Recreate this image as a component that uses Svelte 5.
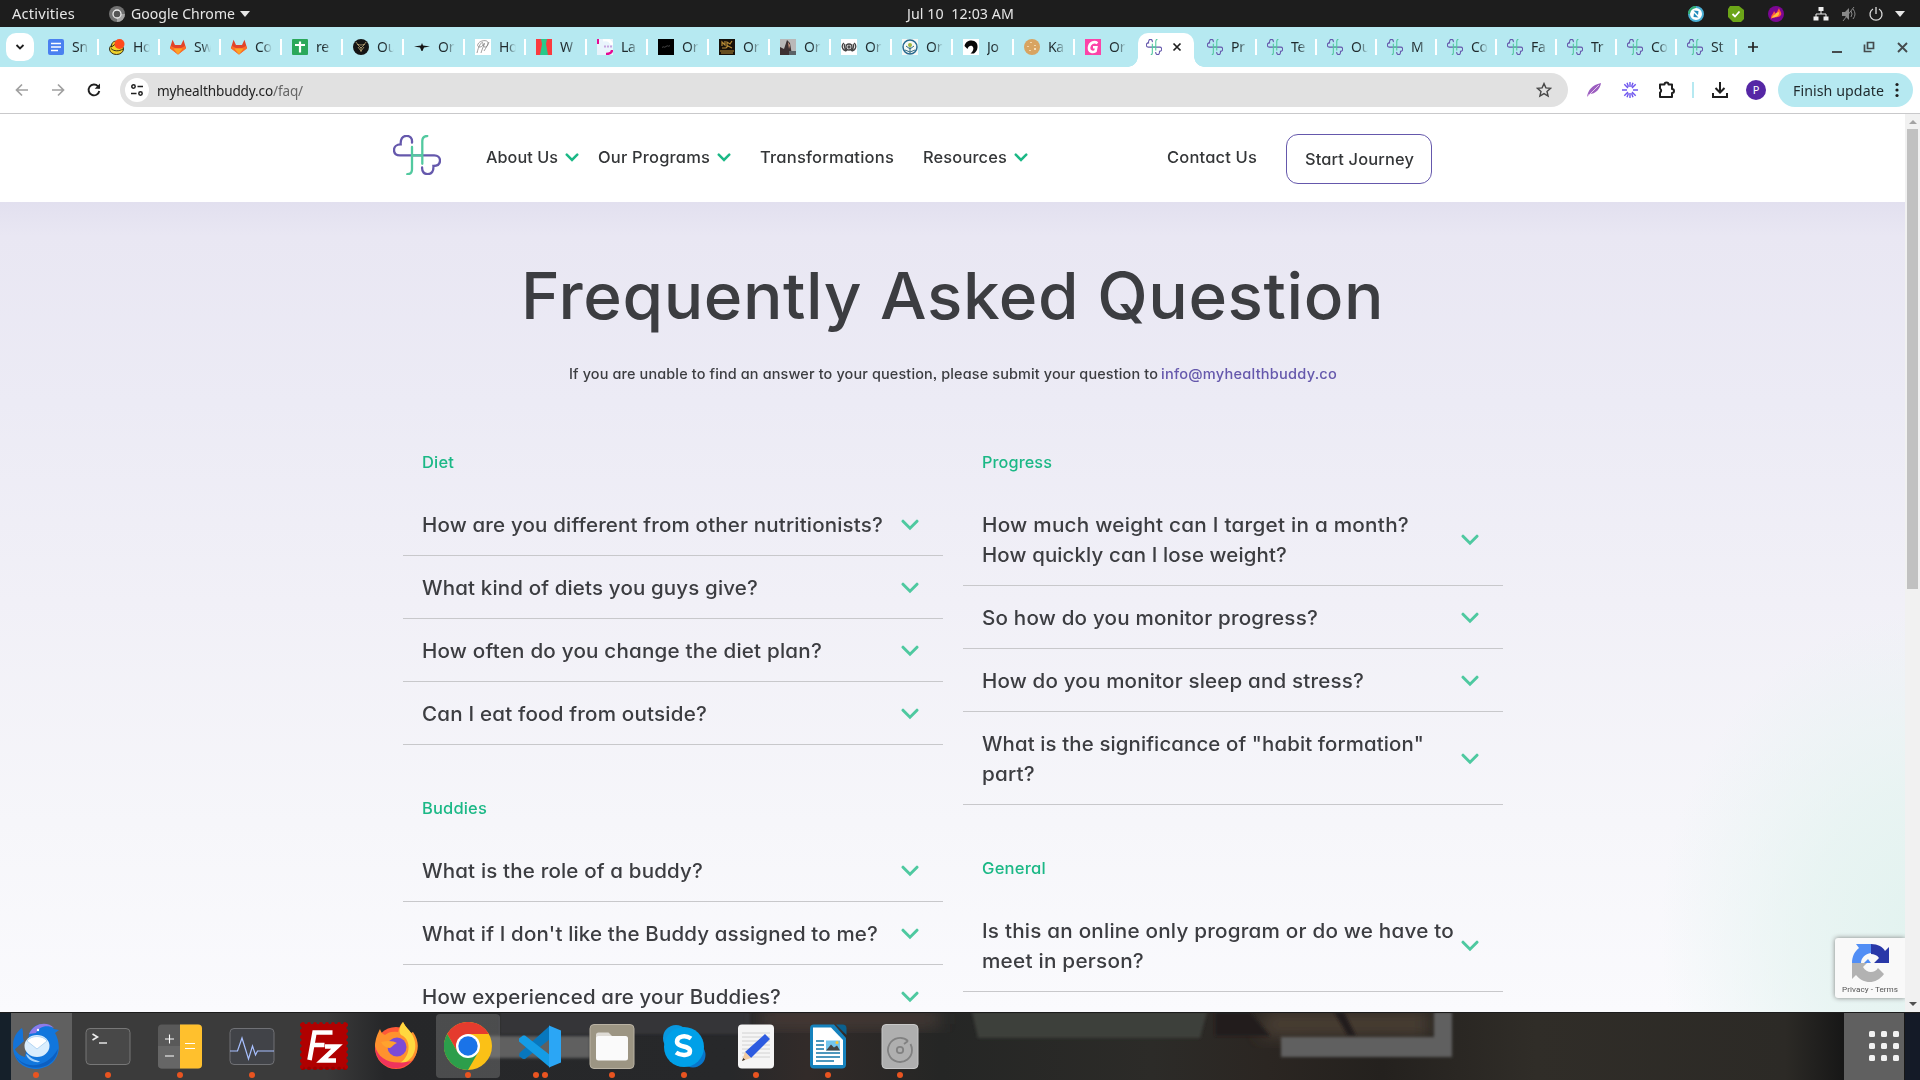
<script>
  // Fills the given width with a line of text: part of the difference goes
  // into wider glyphs, the rest into the space between the letters.
  function fit(node, width) {
    const apply = (w) => {
      const s = node.style;
      s.display = 'inline-block';
      s.transform = 'none';
      s.marginRight = '0px';
      s.letterSpacing = '0px';
      s.width = 'max-content';
      const natural = node.getBoundingClientRect().width;
      const scale = 1 + (w / natural - 1) * 0.6;
      const inner = w / scale;
      s.letterSpacing = `${(inner - natural) / node.textContent.length}px`;
      s.width = `${inner}px`;
      s.transformOrigin = '0 50%';
      s.transform = `scaleX(${scale})`;
      s.marginRight = `${w - inner}px`;
    };
    apply(width);
    return { update: apply };
  }

  const tabs = [
    ['docs', 'Sn'], ['hat', 'Ho'], ['gitlab', 'Sw'], ['gitlab', 'Co'], ['sheets', 're'],
    ['beads', 'Ou'], ['plane', 'Or'], ['script', 'Ho'], ['dress', 'W'], ['lasso', 'La'],
    ['black', 'Or'], ['gold', 'Or'], ['photo', 'Or'], ['wreath', 'Or'], ['tree', 'Or'],
    ['helmet', 'Jo'], ['cookie', 'Ka'], ['pink', 'Or']
  ];
  const buddyTabs = ['Pr', 'Te', 'Ou', 'M', 'Co', 'Fa', 'Tr', 'Co', 'St'];

  const columns = [
    [
      { name: 'Diet', w: 32, items: [
        [['How are you different from other nutritionists?', 461]],
        [['What kind of diets you guys give?', 336]],
        [['How often do you change the diet plan?', 400]],
        [['Can I eat food from outside?', 285]]
      ] },
      { name: 'Buddies', w: 65, items: [
        [['What is the role of a buddy?', 281]],
        [["What if I don't like the Buddy assigned to me?", 456]],
        [['How experienced are your Buddies?', 359]]
      ] }
    ],
    [
      { name: 'Progress', w: 70, items: [
        [['How much weight can I target in a month?', 427], ['How quickly can I lose weight?', 305]],
        [['So how do you monitor progress?', 336]],
        [['How do you monitor sleep and stress?', 382]],
        [['What is the significance of "habit formation"', 442], ['part?', 53]]
      ] },
      { name: 'General', w: 64, items: [
        [['Is this an online only program or do we have to', 472], ['meet in person?', 162]]
      ] }
    ]
  ];

  const dock = [
    ['mail', 1], ['terminal', 1], ['calc', 1], ['monitor', 1], ['filezilla', 0], ['firefox', 0], ['chrome', 1],
    ['code', 2], ['files', 1], ['skype', 1], ['editor', 1], ['writer', 1], ['disk', 1]
  ];
  const teeth = Array.from({ length: 8 }, (_, i) => 3 + i * 6);
</script>

{#snippet logo()}
  <path d="M19 7.7C19.5 3 17 .9 13.5.9 9.5.9 7.3 4 7.7 9.4 3.500 9.400 1 12 1 15c0 3.200 2.200 5.400 5.800 5.400h34.400c3.600 0 5.800 2.200 5.800 5.200 0 3.400-2.600 5.400-6.600 5.400.4 5.200-1.800 8.100-5.600 8.100-3.800 0-5.900-2.400-5.700-6.600" stroke="#6558ac" />
  <path d="M14.300 39.200c3.200 0 4.700-1.800 4.700-5V12M29.300 28.800V6c0-3.200 1.700-5 5-5M19 20.400h10.300" stroke="#52c99f" />
{/snippet}

{#snippet chevron(size)}
  <svg class="chev" class:big={size === 'big'} viewBox="0 0 18 12"><path d="m2 2.200 7 7 7-7" /></svg>
{/snippet}

{#snippet favicon(kind)}
  <svg class="fav" viewBox="0 0 16 16">
    {#if kind === 'docs'}
      <rect width="16" height="16" rx="2" fill="#4a80f0" /><path d="M3 4.500h10M3 8h10M3 11.500h7" stroke="#fff" stroke-width="1.700" />
    {:else if kind === 'hat'}
      <ellipse cx="7.500" cy="10" rx="7" ry="5.500" fill="#efd32c" stroke="#332b16" /><path d="M2.500 8C2 3 6 1 9 3z" fill="#efd32c" stroke="#332b16" /><circle cx="10.500" cy="5" r="5" fill="#ff4a1c" /><path d="M2 9.500c3 3 8 3 12 .5" stroke="#332b16" fill="none" />
    {:else if kind === 'gitlab'}
      <path d="M8 15.500 0 9 2.500.8 5 6h6L13.500.8 16 9z" fill="#e24329" /><path d="m8 15.500-8-6L1 7l4 2h6l4-2 1 2.500z" fill="#fc6d26" /><path d="m3.500 9.500 4.500 6 4.500-6z" fill="#fca326" />
    {:else if kind === 'sheets'}
      <rect width="16" height="16" rx="1" fill="#2aa85a" /><path d="M8 2.500v11M3 6h10" stroke="#fff" stroke-width="2.200" />
    {:else if kind === 'beads'}
      <circle cx="8" cy="8" r="8" fill="#151515" /><path d="M3 3c1 4 9 4 10 0M4 5l4 4 4-4M8 8v5M5 8l3 4 3-4" stroke="#bda777" fill="none" stroke-width=".8" />
    {:else if kind === 'plane'}
      <path d="M0 7.500 7 6.500 8 4l1 2.500 7 1-6 1L8.500 12h-1L6 8.500z" fill="#151515" />
    {:else if kind === 'script'}
      <rect width="16" height="16" fill="#fff" /><path d="M2 14C4 5 8 1 8 5s-7 4-5 0 11-5 10 0-6 3-4 0-2 5-3 9M9 12c2-3 4-7 5-9" stroke="#777" fill="none" stroke-width=".7" />
    {:else if kind === 'dress'}
      <rect width="16" height="16" fill="#fb3a3e" /><path d="M5 0h6l-1 5 2 11H4L6 5z" fill="#27c88b" />
    {:else if kind === 'lasso'}
      <rect width="16" height="16" fill="#e9f4fc" /><path d="M1 0v5" stroke="#e60a94" stroke-width="2" /><path d="M6 1c5-1 8 1 9 5" stroke="#fff" stroke-width="3" fill="none" /><path d="M15 11c0 2-2 4-6 4" stroke="#e60a94" stroke-width="2.500" fill="none" /><path d="M7 7.500h8" stroke="#c7a3df" stroke-width="2" stroke-dasharray="2 1" />
    {:else if kind === 'black'}
      <rect width="16" height="16" /><path d="M4 8.500c2-2 2 1 4-1s2 1 4-1" stroke="#444" fill="none" />
    {:else if kind === 'gold'}
      <rect width="16" height="16" fill="#16110a" /><path d="M3 7V3l3 3V2M8 8V3l3 2 2-3M3 9h4l2-2 4 2M1 12h14M2 14h12" stroke="#b58a35" fill="none" stroke-width="1.200" />
    {:else if kind === 'photo'}
      <rect width="16" height="16" fill="#b9b8b8" /><path d="M0 16V8l4 2 3-9 3 3 2 12z" fill="#3d3132" /><path d="m8 3 2 3-1 4z" fill="#d6a189" /><path d="M9 12h7v4H9z" fill="#5b6166" />
    {:else if kind === 'wreath'}
      <rect width="16" height="16" fill="#fff" /><g stroke="#444" fill="none" stroke-width="1.300"><circle cx="8" cy="8" r="3" /><circle cx="8" cy="8" r="1" /><path d="M3 4C0 6 1 11 5 12M13 4c3 2 2 7-2 8M4 5C2 8 4 10 6 12M12 5c2 3 0 5-2 7" /></g>
    {:else if kind === 'tree'}
      <rect width="16" height="16" fill="#f6f8f5" /><circle cx="8" cy="8" r="7" fill="none" stroke="#276b91" stroke-width="1.500" /><path d="M8 15V5M8 10 4 7M8 10l4-3M8 13l-5-2M8 13l5-2" stroke="#326c82" /><circle cx="8" cy="6" r="2" fill="#a2b83e" />
    {:else if kind === 'helmet'}
      <rect width="16" height="16" fill="#fff" /><path d="M1.500 7C2.500 3 5 1.500 8.500 1.500c4 0 6.500 3 6 7-.3 3-1.500 4.500-3.500 6H7.500c2.500-2 3.500-4.500 2.500-6.500C8.500 5.500 5 7 4.500 10z" fill="#080808" />
    {:else if kind === 'cookie'}
      <circle cx="8" cy="8" r="8" fill="#d8a461" /><path d="M7 3v1M4 7v1M11 6v1M6 11v1M10 10h2" stroke="#fff0d2" stroke-width="1.300" />
    {:else}
      <rect width="16" height="16" fill="#fc43a8" /><path d="M12.500 4.200C9 1.700 4.500 4 4 8.500c-.3 4 3.500 5.500 6.500 3.700l.8-4H8" stroke="#fff" stroke-width="2.600" fill="none" />
    {/if}
  </svg>
{/snippet}

{#snippet buddyIcon()}
  <svg class="fav" viewBox="0 0 48 40" preserveAspectRatio="none"><g fill="none" stroke-width="3.200">{@render logo()}</g></svg>
{/snippet}

{#snippet app(kind)}
  <svg class="app" viewBox="0 0 48 48">
    {#if kind === 'mail'}
      <path d="M2 28C-1 19 4 10 10 6c2 5 0 9 2 13z" fill="#1373d9" /><path d="M17 12C22-1 37 0 42 7l5 1-4 3c8 14 4 34-18 36C9 47 1 37 1 24c4 8 8 10 12 11z" fill="#1176dd" /><path d="M17 12C22 0 36-1 42 6c-8-4-15-1-18 5z" fill="#8d7bea" /><path d="M2 30c4 15 30 21 44-3-3 24-38 25-44 3z" fill="#0d5fc0" /><ellipse cx="25" cy="24" rx="12.500" ry="11" fill="#d9edfd" /><path d="m15 19 10 8 10-8c-4-6-16-6-20 0z" fill="#fff" stroke="#9cc7ec" stroke-width=".7" /><path d="M16 33c4 5 10 5 12 7-7 1-13-3-14-8z" fill="#a6d2fa" /><circle cx="26" cy="8" r="1.200" fill="#fff" />
    {:else if kind === 'terminal'}
      <rect x="2" y="6.500" width="44" height="36" rx="4" fill="#484848" stroke="#777" /><path d="m8.500 12 5 3-5 3" fill="none" stroke="#eee" stroke-width="1.600" /><path d="M15 21h8" stroke="#eee" stroke-width="1.400" />
    {:else if kind === 'calc'}
      <rect x="2" y="2.500" width="44" height="44" rx="4" fill="#595959" /><path d="M2 24h22v22.500H6a4 4 0 0 1-4-4z" fill="#666" /><path d="M24 2.500h18a4 4 0 0 1 4 4v36a4 4 0 0 1-4 4H24z" fill="#ffc02d" /><path d="M9 17h9M13.500 12.500v9M9 34h9M29 21.500h10M29 26.500h10" stroke="#fff" stroke-width="1.100" />
    {:else if kind === 'monitor'}
      <rect x="2" y="6.500" width="44" height="36" rx="4" fill="#414348" stroke="#707175" /><path d="M2 29h7.500L14 16l6.500 21 4-13 3 9 2-4H46" fill="none" stroke="#a8c0ff" stroke-width="1.200" />
    {:else if kind === 'filezilla'}
      <rect x="1.500" y="2" width="45" height="45" fill="#b00000" />
      {#each teeth as t}<circle cx={t} cy="2" r="1.900" fill="#b00000" /><circle cx={t} cy="46.500" r="1.900" fill="#970000" /><circle cx="1.800" cy={t} r="1.900" fill="#b00000" /><circle cx="46.200" cy={t} r="1.900" fill="#b00000" />{/each}
      <g fill="none" stroke="#fff" stroke-width="4.600"><path d="m9.500 38 5-27.500h18M12.500 23h12" /><path d="M25 24.500h12L22 38.500h14" /></g>
    {:else if kind === 'firefox'}
      <circle cx="24" cy="26" r="21" fill="#ff5938" /><path d="M3 25C3 17 6 11 8 7c1 3 2 5 5 6 3-3 8-4 13-3C27 6 28 3 31 0c3 6 6 8 8 11l2-1c10 14 3 29-8 33C20 47 5 40 3 25z" fill="#ff922e" /><path d="M31 0c3 6 7 8 10 14 7 15-3 28-15 28 12-5 15-24 3-29-3-4-1-9 2-13z" fill="#ffd83f" /><path d="M3 24c3 13 16 20 36 15C28 52 4 47 3 24z" fill="#f0345c" /><circle cx="25" cy="25" r="9.500" fill="#7c4bd6" /><path d="M9 20c7-2 13-1 16 1-3 1-5 4-7 5-4 0-7-2-9-6z" fill="#ffa22e" />
    {:else if kind === 'chrome'}
      <circle cx="24" cy="24" r="24" fill="#fbc116" /><path d="M3.200 12a24 24 0 0 1 41.600 0H24L13.600 30z" fill="#e53b2e" /><path d="M3.200 12A24 24 0 0 0 24 48l10.400-18-10.400 6-10.400-6z" fill="#2c9e4b" /><circle cx="24" cy="24" r="12" fill="#fff" /><circle cx="24" cy="24" r="9.700" fill="#1a73e8" />
    {:else if kind === 'code'}
      <path d="M34 3.500 3.500 31 3 34l4 3h2l25-20z" fill="#0877bd" /><path d="M34 45.500 3 19.500v-3l4-3h2L34 33z" fill="#149ce5" /><path d="m33 3.500 12 5v32l-12 5z" fill="#2ba6f5" />
    {:else if kind === 'files'}
      <rect x="2" y="2.500" width="44" height="44" rx="4" fill="#9c9583" stroke="#b9b2a3" /><path d="M8 13a2.500 2.500 0 0 1 2.500-2.500h10l4 4H37v10H8z" fill="#dedbd5" /><rect x="8" y="14" width="32" height="24.500" rx="2.500" fill="#fafafa" />
    {:else if kind === 'skype'}
      <circle cx="16" cy="16" r="13" fill="#0997df" /><circle cx="33" cy="33" r="12.500" fill="#0876cb" /><circle cx="24" cy="25" r="20" fill="#00a0e8" /><path d="M31 16.500c-6-4-14-2-14 3 0 6.500 13 3.500 13 9.500 0 5-9 5-14 1.500" fill="none" stroke="#fff" stroke-width="4.500" />
    {:else if kind === 'editor'}
      <rect x="6" y="2.500" width="36" height="44" rx="4" fill="#f5f5f5" /><path d="M10 11h28M10 15h28M10 19h28M10 23h28M10 27h28M10 31h28M10 35h28" stroke="#c9c9c9" stroke-width=".8" /><path d="m13 30 20-18 5 5-19 19z" fill="#2d5be0" /><path d="m10 39 3-9 6 6z" fill="#f1cba1" /><path d="m10 39 1.200-3 2 1.800z" fill="#333" />
    {:else if kind === 'writer'}
      <path d="M10 2.500h20L42 16v26.500a4 4 0 0 1-4 4H10a4 4 0 0 1-4-4v-36a4 4 0 0 1 4-4z" fill="#1682bd" /><path d="M32 2.500h6.500a4 4 0 0 1 4 4V13z" fill="#0b618f" /><path d="M9 5.500h18L39 18v25H9z" fill="#fff" /><path d="M12 19h8M12 23h8M12 27h8M12 31h24M12 35h24M12 39h18" stroke="#1376a8" stroke-width="1.700" /><rect x="22" y="18.500" width="14" height="10" fill="#72c5ee" /><path d="m22 28.500 5-6 3 3 3-2 3 5z" fill="#444" /><circle cx="33" cy="20.500" r="1.500" fill="#ffc62f" />
    {:else}
      <rect x="6" y="2.500" width="36" height="44" rx="4" fill="#afafaf" stroke="#c8c8c8" /><path d="M32 19a12 12 0 1 0 4 9c0-2-.5-4-1.500-6M32 19l-4 3" fill="none" stroke="#818181" stroke-width="1.800" /><circle cx="24" cy="28" r="3.200" fill="none" stroke="#818181" stroke-width="1.800" />
    {/if}
  </svg>
{/snippet}

<div class="desktop">
  <header class="topbar">
    <span use:fit={63}>Activities</span>
    <svg class="gchrome" viewBox="0 0 16 16"><circle cx="8" cy="8" r="8" fill="#727272" /><path d="M8 8h8a8 8 0 0 1-8 8z" fill="#a5a5a5" /><circle cx="8" cy="8" r="4" fill="#555" stroke="#eee" stroke-width="1.300" /></svg>
    <div class="appname"><span use:fit={104}>Google Chrome</span></div>
    <i class="tri"></i>
    <div class="clock"><span use:fit={107}>Jul 10&nbsp; 12:03 AM</span></div>
    <div class="tray">
      <svg class="t1" viewBox="0 0 16 16"><circle cx="8" cy="8" r="7" fill="#fff" stroke="#4aafd5" stroke-width="2" /><path d="M1 8a7 7 0 0 1 7-7" stroke="#33ad70" stroke-width="2" fill="none" /><path d="m5.500 4.500 5 .5-.5 4zM10.500 11.500l-5-.5.500-4z" fill="#228bbb" /></svg>
      <svg class="t2" viewBox="0 0 16 16"><path d="M2 0h9l5 4v9l-3 3H5L0 11V3z" fill="#6ca518" /><path d="m4.500 8 2.500 2.500L11.500 5.500" stroke="#fff" stroke-width="1.800" fill="none" /></svg>
      <svg class="t3" viewBox="0 0 16 16"><circle cx="8" cy="8" r="8" fill="#7c0693" /><path d="M3 13C3 8 5 9 6 5l2 3 3-6c1 4 3 4 2 7-3 4-7 1-10 4z" fill="#ff5940" /><path d="M4 12c1-4 3-2 4-5l3-1c1 4-3 5-7 6z" fill="#ffc338" /></svg>
      <svg class="t4" viewBox="0 0 16 16"><path d="M5.500 1h5v4h-5zM.5 10.500h5v4h-5zM10.500 10.500h5v4h-5z" fill="#eee" /><path d="M8 5v3M3 11V8h10v3" stroke="#eee" fill="none" /></svg>
      <svg class="t5" viewBox="0 0 16 16"><path d="M1 6h3l4-4v12l-4-4H1z" fill="#888" /><path d="M10 5q2 3 0 6M12 3q4 5 0 10M2 15 13 1" stroke="#888" fill="none" /></svg>
      <svg class="t6" viewBox="0 0 16 16"><path d="M5 3a6 6 0 1 0 6 0M8 1v7" stroke="#ddd" stroke-width="1.300" fill="none" /></svg>
      <i class="tri"></i>
    </div>
  </header>

  <nav class="tabstrip">
    <button class="tabsearch" aria-label="Search tabs"><svg viewBox="0 0 10 8"><path d="m1.500 2 3.500 3.500L8.500 2" fill="none" stroke="#1f1f1f" stroke-width="1.800" /></svg></button>
    {#each tabs as [icon, title], i}
      <div class="tab" class:bare={i === tabs.length - 1}>{@render favicon(icon)}<span>{title}</span></div>
    {/each}
    <div class="tab active">{@render buddyIcon()}<svg class="close" viewBox="0 0 10 10"><path d="m1.500 1.500 7 7m0-7-7 7" stroke="#1f1f1f" stroke-width="1.700" /></svg></div>
    {#each buddyTabs as title}
      <div class="tab second">{@render buddyIcon()}<span>{title}</span></div>
    {/each}
    <svg class="plus" viewBox="0 0 12 12"><path d="M6 1v10M1 6h10" stroke="#222" stroke-width="1.700" /></svg>
    <svg class="winctl" viewBox="0 0 76 14">
      <path d="M0 12h10" stroke="#454b4d" stroke-width="2" /><path d="M32.500 4.500v7h7M35.500 2.500h6v6h-6z" fill="none" stroke="#454b4d" stroke-width="1.700" /><path d="m66 3 9 9m0-9-9 9" stroke="#454b4d" stroke-width="1.900" />
    </svg>
  </nav>

  <div class="toolbar">
    <div class="navicons">
      <svg viewBox="0 0 16 16"><path d="M14 8H3m5-5.500L2.500 8 8 13.500" fill="none" stroke="#a0a0a0" stroke-width="1.700" /></svg>
      <svg viewBox="0 0 16 16"><path d="M2 8h11M8 2.500 13.500 8 8 13.500" fill="none" stroke="#a0a0a0" stroke-width="1.700" /></svg>
      <svg viewBox="0 0 16 16"><path d="M13.300 9A5.400 5.400 0 1 1 12 4.300L13.500 6" fill="none" stroke="#1f1f1f" stroke-width="1.900" /><path d="M14 1.500v5.300H8.700z" fill="#1f1f1f" /></svg>
    </div>
    <div class="omnibox">
      <div class="site"><svg viewBox="0 0 14 14"><circle cx="3.500" cy="3.500" r="1.700" /><path d="M7.500 3.500H13M1 10.500h5.500" /><circle cx="10.500" cy="10.500" r="1.700" /></svg></div>
      <span class="url" use:fit={116}>myhealthbuddy.co</span><span class="url path" use:fit={30}>/faq/</span>
      <svg class="star" viewBox="0 0 16 16"><path d="m8 1.600 1.900 4.300 4.700.4-3.600 3.100 1.100 4.600L8 11.600 3.900 14 5 9.400 1.400 6.300l4.700-.4z" fill="none" stroke="#474747" stroke-width="1.400" /></svg>
    </div>
    <div class="exts">
      <svg class="feather" viewBox="0 0 16 16"><path d="M1 15C2 8 6 3 15 1c-1 6-5 11-12 11z" fill="#9c5fc0" /><path d="M1 15 13 3" stroke="#e7c9ee" /></svg>
      <svg class="burst" viewBox="0 0 16 16"><path d="M8 0v5M8 11v5M0 8h5M11 8h5M2.300 2.300 6 6M10 10l3.700 3.700M13.700 2.300 10 6M6 10l-3.700 3.700M5 .7l1.500 4M11 .7l-1.500 4M5 15.300l1.500-4M11 15.300l-1.500-4" stroke="#6e55ee" stroke-width="1.400" /></svg>
      <svg class="puzzle" viewBox="0 0 18 18"><path d="M2 3.500h4.500a2 2 0 0 1 4 0H14V8a2 2 0 0 1 0 4v4H2v-4.500a2.300 2.300 0 0 0 0-4z" fill="none" stroke="#1f1f1f" stroke-width="2" stroke-linejoin="round" /></svg>
      <i class="divider"></i>
      <svg class="down" viewBox="0 0 18 18"><path d="M9 1v10M4.500 7 9 11.500 13.500 7M2 12v4h14v-4" fill="none" stroke="#1f1f1f" stroke-width="2" /></svg>
      <b class="avatar">P</b>
    </div>
    <div class="update"><span use:fit={91}>Finish update</span><svg viewBox="0 0 4 16"><circle cx="2" cy="2.500" r="1.600" /><circle cx="2" cy="8" r="1.600" /><circle cx="2" cy="13.500" r="1.600" /></svg></div>
  </div>

  <div class="viewport">
    <main class="page">
      <div class="sitenav">
        <svg class="logo" viewBox="0 0 48 40"><g fill="none" stroke-width="2.300" stroke-linecap="round">{@render logo()}</g></svg>
        <a class="n1"><span use:fit={72}>About Us</span>{@render chevron()}</a>
        <a class="n2"><span use:fit={112}>Our Programs</span>{@render chevron()}</a>
        <a class="n3"><span use:fit={134}>Transformations</span></a>
        <a class="n4"><span use:fit={84}>Resources</span>{@render chevron()}</a>
        <a class="n5"><span use:fit={90}>Contact Us</span></a>
        <button class="cta"><span use:fit={109}>Start Journey</span></button>
      </div>
      <section class="hero">
        <h1><span use:fit={863}>Frequently Asked Question</span></h1>
        <p><span use:fit={589}>If you are unable to find an answer to your question, please submit your question to</span><a class="mail"><span use:fit={176}>info@myhealthbuddy.co</span></a></p>
        <div class="faq">
          {#each columns as groups}
            <div class="col">
              {#each groups as g}
                <h2><span use:fit={g.w}>{g.name}</span></h2>
                {#each g.items as lines}
                  <div class="q">
                    <div>{#each lines as [text, w]}<div class="line"><span use:fit={w}>{text}</span></div>{/each}</div>
                    {@render chevron('big')}
                  </div>
                {/each}
              {/each}
            </div>
          {/each}
        </div>
      </section>
      <aside class="captcha">
        <svg viewBox="0 0 38 38"><path d="M19 0v19H0C0 12 3 7 7 4L4 0z" fill="#518ef5" /><path d="M19 0c7 0 12 3 14 7l4-4v16H22l5-5c-2-3-5-4-8-4z" fill="#2938a8" /><path d="M0 19h15l-4 4c4 7 12 6 15 1l6 6C24 41 11 40 4 31l-4 4z" fill="#b2b2b2" /><path d="m19 9 0 10-3-4-4 4H9c0-5 4-9 10-10z" fill="#f9f9f9" /></svg>
        <div class="legal"><span use:fit={56}>Privacy - Terms</span></div>
      </aside>
    </main>
    <div class="scroll"><i class="up"></i><i class="thumb"></i><i class="dn"></i></div>
  </div>

  <footer class="dock">
    <svg class="wall" viewBox="0 0 1920 68" preserveAspectRatio="none">
      <defs>
        <filter id="soft" x="-20%" y="-50%" width="140%" height="200%"><feGaussianBlur stdDeviation="9" /></filter>
        <filter id="edge"><feGaussianBlur stdDeviation="1.500" /></filter>
        <linearGradient id="base"><stop offset="0" stop-color="#3b3b3b" /><stop offset=".17" stop-color="#3b3b3b" /><stop offset=".2" stop-color="#262729" /><stop offset=".38" stop-color="#27282a" /><stop offset=".42" stop-color="#322b29" /><stop offset=".49" stop-color="#252625" /><stop offset=".6" stop-color="#2c2b28" /><stop offset=".66" stop-color="#2b2622" /><stop offset=".72" stop-color="#24211e" /><stop offset=".8" stop-color="#302d28" /><stop offset=".93" stop-color="#2c2a26" /><stop offset=".96" stop-color="#171717" /></linearGradient>
      </defs>
      <rect width="1920" height="68" fill="url(#base)" />
      <path d="M500 0h250v22H500z" fill="#343537" filter="url(#edge)" />
      <path d="M760 0h180v14H760z" fill="#4e403a" filter="url(#soft)" />
      <path d="M972 0h235l-7 26H978z" fill="#3d3f3b" filter="url(#edge)" />
      <path d="M1265 0h165v24h-170z" fill="#4c4036" filter="url(#soft)" />
      <path d="M1215 0h35l20 24h-55zM1334 0h10l12 24h-8z" fill="#211d1c" filter="url(#edge)" />
      <path d="M488 24h102v22H488z" fill="#606060" filter="url(#edge)" />
      <path d="M1434 0h18v45h-171V25h153z" fill="#606060" filter="url(#edge)" />
      <rect width="11" height="68" fill="#15202a" /><rect x="11" width="61" height="68" fill="#606060" />
      <rect x="1844" width="60" height="68" fill="#606060" /><rect x="1905" width="15" height="68" fill="#141a27" />
      <rect width="1920" height="1" fill="#1c1c1c" />
    </svg>
    <div class="apps">
      {#each dock as [kind, dots]}
        <div class="slot" class:current={kind === 'chrome'}>
          {@render app(kind)}
          <div class="dots">{#each { length: dots } as _}<i></i>{/each}</div>
        </div>
      {/each}
      <svg class="grid" viewBox="0 0 30 30">
        {#each [0, 12, 24] as x}{#each [0, 12, 24] as y}<rect {x} {y} width="6" height="6" rx="1.500" fill="#f2f2f2" />{/each}{/each}
      </svg>
    </div>
  </footer>
</div>

<style>
  :global(body) { margin: 0; overflow: hidden; }
  .desktop { width: 1920px; height: 1080px; display: flex; flex-direction: column; overflow: hidden; font-family: "Noto Sans", sans-serif; }
  svg { display: block; flex: none; }
  span { white-space: nowrap; flex: none; }
  i { display: block; flex: none; }

  .topbar { height: 27px; flex: none; background: #1d1d1d; color: #e6e6e6; display: flex; align-items: center; font-size: 14px; box-sizing: border-box; padding-left: 12px; line-height: 27px; }
  .gchrome { width: 16px; height: 16px; margin-left: 34px; }
  .appname { width: 104px; margin-left: 6px; flex: none; }
  .tri { border: 5px solid transparent; border-top: 6px solid #e6e6e6; border-bottom: 0; margin-left: 5px; }
  .clock { width: 107px; margin-left: 657px; flex: none; }
  .tray { display: flex; align-items: center; margin-left: 674px; }
  .tray svg { width: 16px; height: 16px; }
  .t2, .t3 { margin-left: 24px; }
  .t4 { margin-left: 29px; }
  .t5 { margin-left: 12px; }
  .t6 { margin-left: 11px; }
  .tray .tri { margin-left: 11px; }

  .tabstrip { height: 40px; flex: none; background: #b6e9f1; display: flex; align-items: center; }
  .tabsearch { width: 28px; height: 28px; margin: 0 14px 0 6px; padding: 0; border: 0; border-radius: 10px; background: #fff; display: grid; place-items: center; flex: none; }
  .tabsearch svg { width: 10px; height: 8px; }
  .tab { width: 49px; height: 16px; margin-right: 10px; border-right: 2px solid #fff; flex: none; display: flex; align-items: center; }
  .tab.bare { border-color: transparent; margin-right: 0; width: 45px; }
  .tab.second { width: 48px; }
  .fav { width: 16px; height: 16px; }
  .tab span { width: 17px; margin-left: 8px; overflow: hidden; font-size: 14px; line-height: 20px; color: #1f2a2d; letter-spacing: -.3px; mask-image: linear-gradient(90deg, #000 45%, transparent); }
  .tab.active { position: relative; align-self: flex-end; box-sizing: border-box; width: 56px; height: 34px; padding-left: 8px; border: 0; border-radius: 10px 10px 0 0; background: #fff; margin-right: 13px; margin-left: 6px; }
  .tab.active::before, .tab.active::after { content: ""; position: absolute; bottom: 0; width: 10px; height: 10px; }
  .tab.active::before { left: -10px; background: radial-gradient(circle at 0 0, transparent 9.500px, #fff 10px); }
  .tab.active::after { right: -10px; background: radial-gradient(circle at 100% 0, transparent 9.500px, #fff 10px); }
  .tab.active svg { margin-bottom: 6px; }
  .close { width: 10px; height: 10px; margin-left: 10px; }
  .plus { width: 12px; height: 12px; }
  .winctl { width: 76px; height: 14px; margin-left: 73px; }

  .toolbar { height: 46px; flex: none; background: #fff; border-bottom: 1px solid #c9c9cb; display: flex; align-items: center; }
  .navicons { display: flex; gap: 20px; margin-left: 14px; width: 106px; }
  .navicons svg { width: 16px; height: 16px; }
  .omnibox { width: 1448px; height: 34px; border-radius: 17px; background: #e1e1e1; display: flex; align-items: center; box-sizing: border-box; padding-left: 5px; font-size: 14px; }
  .site { width: 24px; height: 24px; border-radius: 50%; background: #fff; display: grid; place-items: center; margin-right: 8px; }
  .site svg { width: 14px; height: 14px; fill: none; stroke: #1f1f1f; stroke-width: 1.500; }
  .url { color: #222; }
  .url.path { color: #666; }
  .star { width: 16px; height: 16px; margin-left: auto; margin-right: 16px; }
  .exts { display: flex; align-items: center; width: 210px; }
  .feather { width: 16px; height: 16px; margin-left: 18px; }
  .burst { width: 16px; height: 16px; margin-left: 20px; }
  .puzzle { width: 18px; height: 18px; margin-left: 20px; }
  .divider { width: 2px; height: 16px; background: #b6e9f1; margin-left: 16px; }
  .down { width: 18px; height: 18px; margin-left: 17px; }
  .avatar { width: 20px; height: 20px; border-radius: 50%; background: #5527a5; color: #fff; font: 11px/20px "Noto Sans", sans-serif; text-align: center; margin-left: 17px; }
  .update { width: 135px; height: 34px; border-radius: 17px; background: #b6e9f1; box-sizing: border-box; padding-left: 15px; display: flex; align-items: center; font-size: 14px; color: #1f2a2d; }
  .update svg { width: 4px; height: 16px; margin-left: 11px; fill: #1f1f1f; }

  .viewport { height: 898px; flex: none; display: flex; overflow: hidden; }
  .page { width: 1905px; position: relative; overflow: hidden; font-family: Inter, sans-serif; font-weight: 460; font-feature-settings: "cv11", "ss03"; color: #3c3d41; }
  .sitenav { height: 88px; background: #fff; display: flex; align-items: center; font-size: 16px; line-height: 24px; color: #343638; }
  .logo { width: 48px; height: 40px; margin: -6px 45px 0 393px; }
  .sitenav a { display: flex; align-items: center; flex: none; height: 24px; margin-top: -3px; }
  .chev { width: 14px; height: 9px; fill: none; stroke: #1bb886; stroke-width: 3.300; stroke-linecap: round; }
  .chev.big { width: 18px; height: 12px; stroke: #4ec9a0; stroke-width: 3; }
  .sitenav .chev { margin-left: 7px; margin-top: 2px; }
  .n1 { width: 112px; }
  .n2 { width: 162px; }
  .n3 { width: 163px; }
  .n4 { width: 244px; }
  .n5 { width: 119px; }
  .cta { width: 146px; height: 50px; border: 1px solid #6558ac; border-radius: 12px; background: #fff; padding: 0 0 0 18px; text-align: left; font: inherit; font-feature-settings: inherit; color: inherit; margin-top: 2px; flex: none; }

  .hero { height: 810px; box-sizing: border-box; background:
      radial-gradient(ellipse 270px 320px at 1930px 730px, #e0f2eef0, #e4f3f0c0 45%, #e8f4f300 100%),
      linear-gradient(#e2e0ef 0, #e9e7f3 34px, #ecebf5 200px, #f1f0f7 400px, #f6f6fa 620px, #fafafd 810px); }
  h1 { margin: 0; padding: 47px 0 0 521px; font-size: 64px; line-height: 94px; height: 94px; font-weight: 500; }
  p { margin: 0; padding: 18px 0 0 569px; height: 69px; box-sizing: border-box; display: flex; font-size: 14px; line-height: 25px; }
  p .mail { margin-left: 3px; color: #6558ac; }
  .faq { display: flex; gap: 20px; padding-left: 403px; margin-top: -13px; }
  .col { width: 540px; }
  h2 { margin: 0; height: 94px; box-sizing: border-box; padding: 51px 0 0 19px; font-size: 16px; line-height: 24px; font-weight: 460; color: #1bb886; }
  .q { display: flex; justify-content: space-between; align-items: center; padding: 17px 24px 15px 19px; border-bottom: 1px solid #c8c8cb; font-size: 20px; line-height: 30px; }
  .line { height: 30px; }

  .captcha { position: absolute; right: 0; bottom: 14px; width: 70px; height: 60px; background: #f9f9f9; border-radius: 3px 0 0 3px; box-shadow: 0 0 5px #808080; display: flex; flex-direction: column; align-items: flex-start; font: 8px/12px Roboto, sans-serif; color: #555; }
  .captcha svg { width: 38px; height: 38px; margin: 6px 0 2px 17px; }
  .legal { margin-left: 7px; }
  .scroll { width: 15px; background: #f1f1f1; display: flex; flex-direction: column; align-items: center; }
  .up { border: 4px solid transparent; border-bottom: 4px solid #a3a3a3; border-top: 0; margin: 6px 0 5px; }
  .thumb { width: 11px; height: 460px; background: #c1c1c1; }
  .dn { border: 4px solid transparent; border-top: 4px solid #505050; border-bottom: 0; margin-top: auto; margin-bottom: 6px; }

  .dock { height: 68px; flex: none; position: relative; background: #2a2a2a; }
  .wall { position: absolute; inset: 0; width: 1920px; height: 68px; }
  .apps { position: relative; display: flex; height: 68px; }
  .slot { width: 64px; height: 64px; margin: 2px 4px; border-radius: 4px; display: flex; flex-direction: column; align-items: center; flex: none; box-sizing: border-box; padding-top: 8px; }
  .slot.current { background: #85858566; }
  .app { width: 48px; height: 48px; }
  .dots { display: flex; gap: 3px; margin-top: 2px; }
  .dots i { width: 6px; height: 6px; border-radius: 50%; background: #e95420; }
  .grid { width: 30px; height: 30px; margin: 19px 0 0 auto; padding-right: 21px; }
</style>
